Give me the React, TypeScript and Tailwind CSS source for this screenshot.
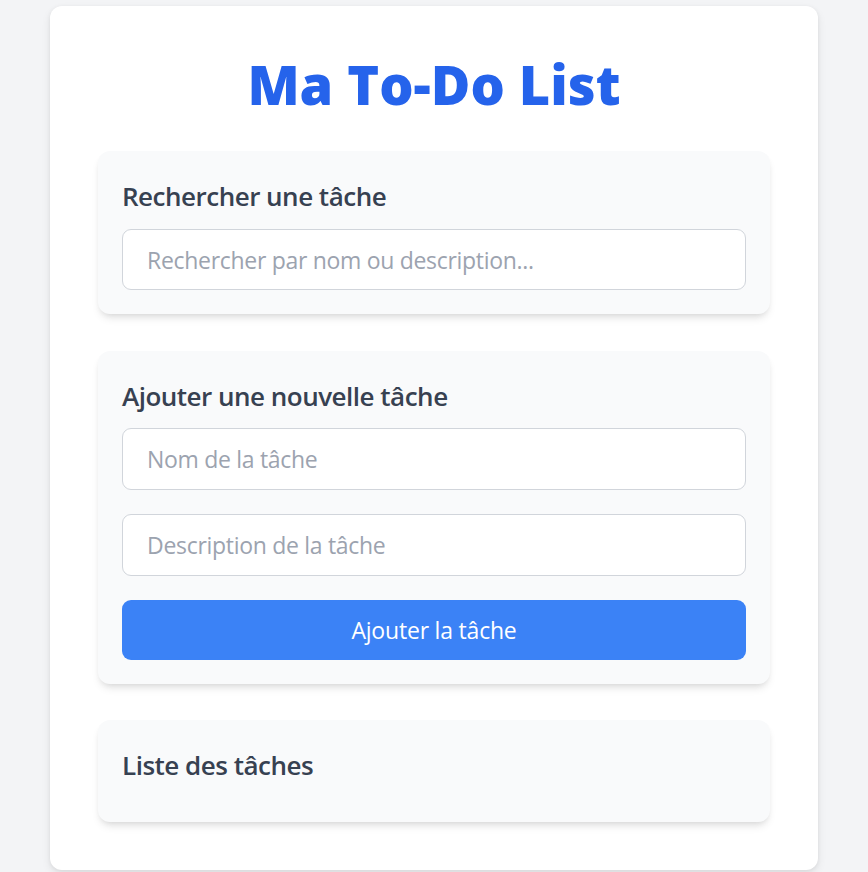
export default function App() {
  const inputCls =
    "block w-full rounded-[9px] border border-[#d1d5db] bg-white px-[24px] text-[23px] tracking-[-0.3px] text-[#374151] outline-none placeholder:text-[#9ca3af]";
  const sectionCls =
    "rounded-[12px] bg-[#f9fafb] p-[24px] shadow-[0_6px_9px_-2px_rgba(0,0,0,0.1),0_3px_6px_-3px_rgba(0,0,0,0.1)]";
  const headingCls = "text-[26px] leading-[42px] font-semibold tracking-[-0.5px] text-[#374151]";
  return (
    <div className="min-h-[872px] bg-[#f3f4f6] pt-[6px] pb-[2px]" style={{ fontFamily: '"Open Sans", "Noto Sans", sans-serif' }}>
      <div className="mx-auto w-[768px] rounded-[12px] bg-white p-[48px] shadow-[0_4px_10px_rgba(0,0,0,0.08),0_1px_4px_rgba(0,0,0,0.06)]">
        <h1 className="mb-[37px] text-center text-[54px] leading-[60px] font-extrabold text-[#2563eb]">Ma To-Do List</h1>

        <div className={`mb-[37px] ${sectionCls}`}>
          <h2 className={`mb-[12px] ${headingCls}`}>Rechercher une tâche</h2>
          <input type="text" placeholder="Rechercher par nom ou description..." className={`h-[61px] ${inputCls}`} />
        </div>

        <div className={`mb-[36px] ${sectionCls}`}>
          <h2 className={`mb-[11px] ${headingCls}`}>Ajouter une nouvelle tâche</h2>
          <div className="flex flex-col gap-[24px]">
            <input type="text" placeholder="Nom de la tâche" className={`h-[62px] ${inputCls}`} />
            <input type="text" placeholder="Description de la tâche" className={`h-[62px] ${inputCls}`} />
            <button className="h-[60px] w-full rounded-[9px] bg-[#3b82f6] text-[23px] tracking-[-0.2px] text-white">
              Ajouter la tâche
            </button>
          </div>
        </div>

        <div className={sectionCls}>
          <h2 className={`mb-[12px] ${headingCls}`}>Liste des tâches</h2>
          <ul></ul>
        </div>
      </div>
    </div>
  );
}
